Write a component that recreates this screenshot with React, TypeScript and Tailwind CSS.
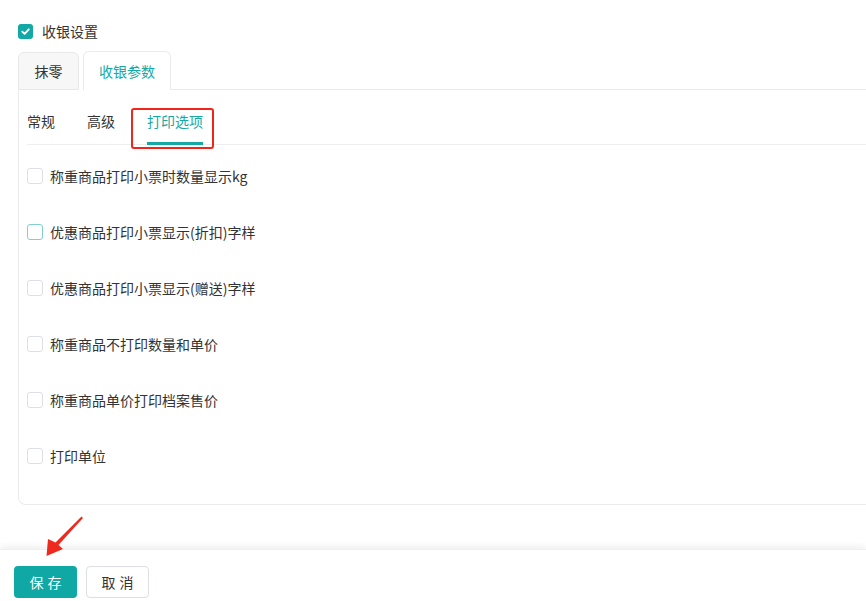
import React from "react";

const items = [
  "称重商品打印小票时数量显示kg",
  "优惠商品打印小票显示(折扣)字样",
  "优惠商品打印小票显示(赠送)字样",
  "称重商品不打印数量和单价",
  "称重商品单价打印档案售价",
  "打印单位",
];

export default function App() {
  return (
    <div
      className="relative w-[866px] h-[601px] overflow-hidden bg-white text-[14px] text-[#333]"
      style={{ fontFamily: '"Noto Sans CJK SC", "Noto Sans", sans-serif' }}
    >
      <div className="pl-[18px] pt-[24px]">
        <div className="flex items-center h-[15px]">
          <span className="shrink-0 w-[15px] h-[15px] rounded-[3px] bg-[#12a8a5] flex items-center justify-center">
            <svg width="11" height="11" viewBox="0 0 12 12">
              <path d="M2.5 6.2 L5 8.6 L9.6 3.6" fill="none" stroke="#fff" strokeWidth="2" strokeLinecap="round" strokeLinejoin="round" />
            </svg>
          </span>
          <span className="ml-[9px] leading-none -mt-[2px]">收银设置</span>
        </div>

        <div className="mt-[12px] flex items-end h-[39px]">
          <div className="w-[61px] h-[38px] flex items-center justify-center bg-[#f7f7f7] border border-[#e8e8e8] rounded-t-[6px]">
            抹零
          </div>
          <div className="ml-[4px] w-[88px] h-[39px] flex items-center justify-center bg-white border border-[#ebebeb] border-b-0 rounded-t-[6px] text-[#14a9a6]">
            收银参数
          </div>
          <div className="flex-1 border-b border-[#ebebeb]" />
        </div>

        <div className="h-[415px] border-l border-b border-[#ebebeb] rounded-bl-[8px] pl-[8px]">
          <div className="flex h-[55px] border-b border-[#eeeeee]">
            <div className="w-[60px] flex items-center pt-[8px]">常规</div>
            <div className="w-[60px] flex items-center pt-[8px]">高级</div>
            <div className="relative flex items-center pt-[8px] text-[#14a9a6]">
              打印选项
              <div className="absolute left-0 right-0 bottom-[-1px] h-[3px] bg-[#14a9a6]" />
            </div>
          </div>
          <div className="pt-[3px]">
            {items.map((t, i) => (
              <div key={i} className="h-[56px] flex items-center">
                <span
                  className={
                    "shrink-0 w-[16px] h-[16px] rounded-[3px] border bg-white " +
                    (i === 1 ? "border-[#82cfcd]" : "border-[#dcdfe6]")
                  }
                />
                <span className="ml-[7px]">{t}</span>
              </div>
            ))}
          </div>
        </div>
      </div>

      <div className="absolute left-0 right-0 top-[549px] bottom-0 bg-white shadow-[0_-3px_6px_rgba(0,0,0,0.06)] border-t border-[#f0f0f0]">
        <div className="flex gap-[9px] pl-[14px] pt-[16px]">
          <button className="w-[63px] h-[32px] rounded-[4px] bg-[#0fa8a5] text-white tracking-[4px] pl-[4px]">
            保存
          </button>
          <button className="w-[63px] h-[32px] rounded-[4px] border border-[#dcdfe6] bg-white text-[#333] tracking-[4px] pl-[4px]">
            取消
          </button>
        </div>
      </div>

      {/* red annotation box */}
      <div className="absolute left-[131px] top-[108px] w-[83px] h-[41px] border-2 border-[#f2241c] rounded-[3px]" />

      {/* red arrow */}
      <svg className="absolute left-0 top-0" width="866" height="601">
        <polygon
          points="81.5,516.5 83,518 58.5,545 63,549 46.5,556 48,539 55.5,542.5"
          fill="#ee2a1f"
        />
      </svg>
    </div>
  );
}
